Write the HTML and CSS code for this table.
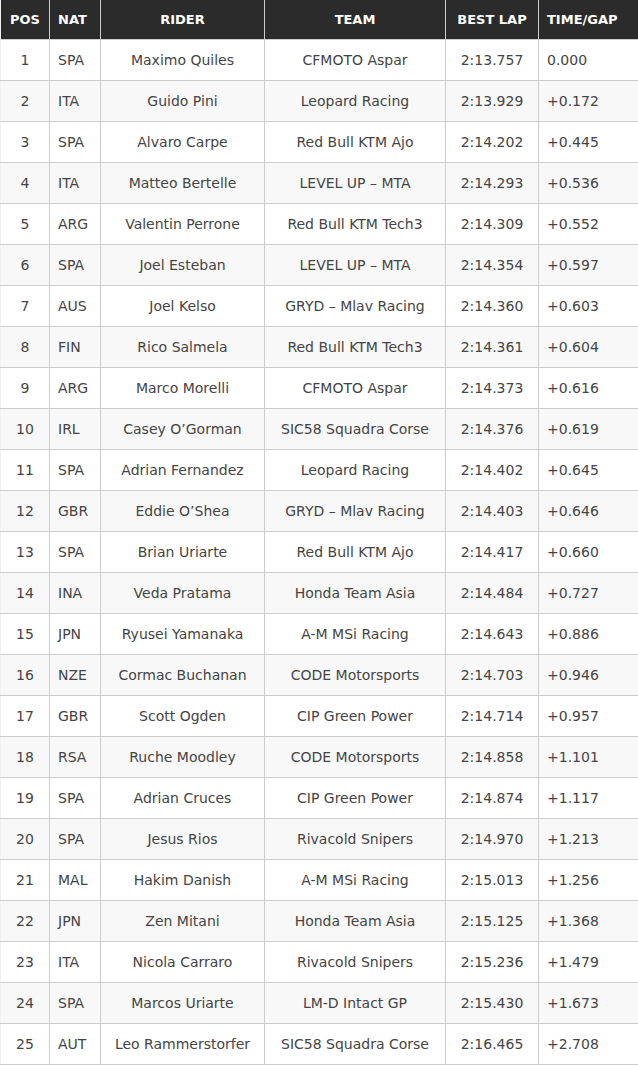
FILE: index.html
```html
<!DOCTYPE html>
<html>
<head>
<meta charset="utf-8">
<link rel="stylesheet" href="styles.css">
</head>
<body>
<table class="results">
<colgroup>
<col class="c-pos"><col class="c-nat"><col class="c-rider"><col class="c-team"><col class="c-lap"><col class="c-gap">
</colgroup>
<thead>
<tr><th class="ctr">POS</th><th class="lft">NAT</th><th class="ctr">RIDER</th><th class="ctr">TEAM</th><th class="ctr">BEST LAP</th><th class="lft">TIME/GAP</th></tr>
</thead>
<tbody>
<tr><td class="ctr">1</td><td>SPA</td><td class="ctr">Maximo Quiles</td><td class="ctr">CFMOTO Aspar</td><td class="ctr">2:13.757</td><td>0.000</td></tr>
<tr><td class="ctr">2</td><td>ITA</td><td class="ctr">Guido Pini</td><td class="ctr">Leopard Racing</td><td class="ctr">2:13.929</td><td>+0.172</td></tr>
<tr><td class="ctr">3</td><td>SPA</td><td class="ctr">Alvaro Carpe</td><td class="ctr">Red Bull KTM Ajo</td><td class="ctr">2:14.202</td><td>+0.445</td></tr>
<tr><td class="ctr">4</td><td>ITA</td><td class="ctr">Matteo Bertelle</td><td class="ctr">LEVEL UP – MTA</td><td class="ctr">2:14.293</td><td>+0.536</td></tr>
<tr><td class="ctr">5</td><td>ARG</td><td class="ctr">Valentin Perrone</td><td class="ctr">Red Bull KTM Tech3</td><td class="ctr">2:14.309</td><td>+0.552</td></tr>
<tr><td class="ctr">6</td><td>SPA</td><td class="ctr">Joel Esteban</td><td class="ctr">LEVEL UP – MTA</td><td class="ctr">2:14.354</td><td>+0.597</td></tr>
<tr><td class="ctr">7</td><td>AUS</td><td class="ctr">Joel Kelso</td><td class="ctr">GRYD – Mlav Racing</td><td class="ctr">2:14.360</td><td>+0.603</td></tr>
<tr><td class="ctr">8</td><td>FIN</td><td class="ctr">Rico Salmela</td><td class="ctr">Red Bull KTM Tech3</td><td class="ctr">2:14.361</td><td>+0.604</td></tr>
<tr><td class="ctr">9</td><td>ARG</td><td class="ctr">Marco Morelli</td><td class="ctr">CFMOTO Aspar</td><td class="ctr">2:14.373</td><td>+0.616</td></tr>
<tr><td class="ctr">10</td><td>IRL</td><td class="ctr">Casey O’Gorman</td><td class="ctr">SIC58 Squadra Corse</td><td class="ctr">2:14.376</td><td>+0.619</td></tr>
<tr><td class="ctr">11</td><td>SPA</td><td class="ctr">Adrian Fernandez</td><td class="ctr">Leopard Racing</td><td class="ctr">2:14.402</td><td>+0.645</td></tr>
<tr><td class="ctr">12</td><td>GBR</td><td class="ctr">Eddie O’Shea</td><td class="ctr">GRYD – Mlav Racing</td><td class="ctr">2:14.403</td><td>+0.646</td></tr>
<tr><td class="ctr">13</td><td>SPA</td><td class="ctr">Brian Uriarte</td><td class="ctr">Red Bull KTM Ajo</td><td class="ctr">2:14.417</td><td>+0.660</td></tr>
<tr><td class="ctr">14</td><td>INA</td><td class="ctr">Veda Pratama</td><td class="ctr">Honda Team Asia</td><td class="ctr">2:14.484</td><td>+0.727</td></tr>
<tr><td class="ctr">15</td><td>JPN</td><td class="ctr">Ryusei Yamanaka</td><td class="ctr">A-M MSi Racing</td><td class="ctr">2:14.643</td><td>+0.886</td></tr>
<tr><td class="ctr">16</td><td>NZE</td><td class="ctr">Cormac Buchanan</td><td class="ctr">CODE Motorsports</td><td class="ctr">2:14.703</td><td>+0.946</td></tr>
<tr><td class="ctr">17</td><td>GBR</td><td class="ctr">Scott Ogden</td><td class="ctr">CIP Green Power</td><td class="ctr">2:14.714</td><td>+0.957</td></tr>
<tr><td class="ctr">18</td><td>RSA</td><td class="ctr">Ruche Moodley</td><td class="ctr">CODE Motorsports</td><td class="ctr">2:14.858</td><td>+1.101</td></tr>
<tr><td class="ctr">19</td><td>SPA</td><td class="ctr">Adrian Cruces</td><td class="ctr">CIP Green Power</td><td class="ctr">2:14.874</td><td>+1.117</td></tr>
<tr><td class="ctr">20</td><td>SPA</td><td class="ctr">Jesus Rios</td><td class="ctr">Rivacold Snipers</td><td class="ctr">2:14.970</td><td>+1.213</td></tr>
<tr><td class="ctr">21</td><td>MAL</td><td class="ctr">Hakim Danish</td><td class="ctr">A-M MSi Racing</td><td class="ctr">2:15.013</td><td>+1.256</td></tr>
<tr><td class="ctr">22</td><td>JPN</td><td class="ctr">Zen Mitani</td><td class="ctr">Honda Team Asia</td><td class="ctr">2:15.125</td><td>+1.368</td></tr>
<tr><td class="ctr">23</td><td>ITA</td><td class="ctr">Nicola Carraro</td><td class="ctr">Rivacold Snipers</td><td class="ctr">2:15.236</td><td>+1.479</td></tr>
<tr><td class="ctr">24</td><td>SPA</td><td class="ctr">Marcos Uriarte</td><td class="ctr">LM-D Intact GP</td><td class="ctr">2:15.430</td><td>+1.673</td></tr>
<tr><td class="ctr">25</td><td>AUT</td><td class="ctr">Leo Rammerstorfer</td><td class="ctr">SIC58 Squadra Corse</td><td class="ctr">2:16.465</td><td>+2.708</td></tr>
</tbody>
</table>
</body>
</html>
```

FILE: styles.css
```css
html, body {
  margin: 0;
  padding: 0;
  background: #ffffff;
}
.results {
  width: 638px;
  table-layout: fixed;
  border-collapse: collapse;
  font-family: "DejaVu Sans", Verdana, sans-serif;
  font-size: 14px;
  color: #444444;
}
.c-pos { width: 49px; }
.c-nat { width: 51px; }
.c-rider { width: 164px; }
.c-team { width: 181px; }
.c-lap { width: 93px; }
.c-gap { width: 100px; }
.results th {
  background: #2b2b2b;
  color: #ffffff;
  font-weight: bold;
  font-size: 13px;
  height: 39px;
  padding: 0 8px;
  box-sizing: border-box;
  border-left: 1px solid #cccccc;
  text-align: left;
}
.results th:first-child { border-left: 1px solid #f0f0f0; }
.results td {
  height: 41px;
  padding: 0 8px;
  box-sizing: border-box;
  border: 1px solid #cccccc;
  text-align: left;
  white-space: nowrap;
}
.results tr td:first-child { border-left-color: #f0f0f0; }
.results tr td:last-child { border-right-color: #f0f0f0; }
.results tbody tr:nth-child(even) td { background: #f8f8f8; }
.results .ctr { text-align: center; }
.results .lft { text-align: left; }
```
